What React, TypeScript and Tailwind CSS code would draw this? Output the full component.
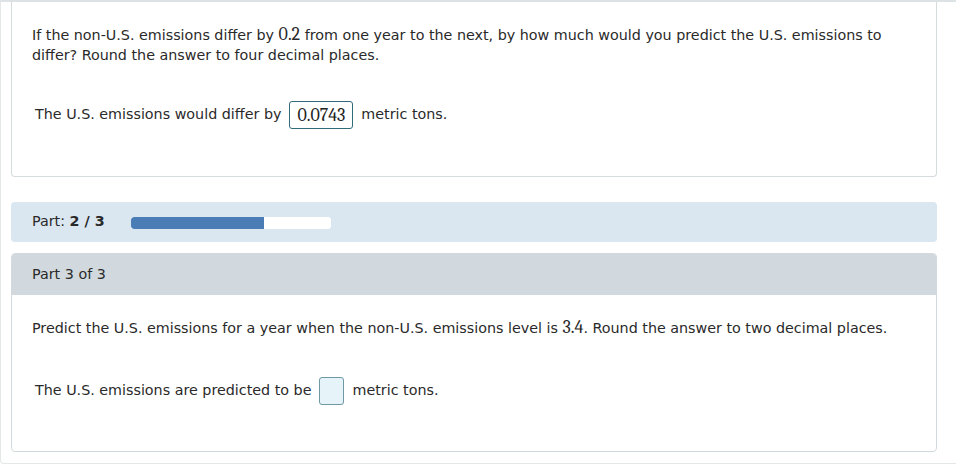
import React from 'react';

const AnswerBox: React.FC<{ value?: string }> = ({ value }) =>
  value ? (
    <span className="inline-flex h-[28px] items-center rounded-[3px] border border-[#2f6b79] bg-white px-[7px] font-serif text-[18px] text-[#222]">
      {value}
    </span>
  ) : (
    <span className="inline-block h-[28px] w-[25px] rounded-[3px] border border-[#6f97a4] bg-[#e6f4f9]" />
  );

const Num: React.FC<{ children: React.ReactNode }> = ({ children }) => (
  <span className="font-serif text-[18px] leading-[20px]">{children}</span>
);

const App: React.FC = () => {
  const progress = 2 / 3;

  return (
    <div className="h-[475px] w-[956px] overflow-hidden bg-white font-[DejaVu_Sans,Verdana,sans-serif] text-[14.3px] text-[#2a2a2a]">
      <div className="h-[464px] rounded-bl-[4px] border-b border-l border-t-2 border-[#e3e7e8] border-t-[#dde3e5] pl-[10px] pr-[19px]">
        {/* previous part */}
        <div className="-mt-[2px] h-[177px] rounded-b-[4px] border-x border-b border-t-2 border-[#d6dbdd] border-t-[#dde3e5] bg-white pl-[20px] pr-[30px] pt-[23px]">
          <p className="leading-[20px]">
            If the non-U.S. emissions differ by <Num>0.2</Num> from one year to the next, by how much would you predict the U.S. emissions to differ? Round the answer to four decimal places.
          </p>
          <div className="mt-[36px] flex items-center gap-[8px] pl-[3px]">
            <span>The U.S. emissions would differ by</span>
            <AnswerBox value="0.0743" />
            <span>metric tons.</span>
          </div>
        </div>

        {/* progress */}
        <div className="mt-[25px] flex h-[40px] items-center rounded-[4px] bg-[#dae6f0] pl-[21px]">
          <span>
            Part: <span className="font-bold">2 / 3</span>
          </span>
          <div className="ml-[26px] mt-[1px] h-[12px] w-[200px] overflow-hidden rounded-[3px] bg-white">
            <div className="h-full rounded-l-[3px] bg-[#4a7db6]" style={{ width: `${progress * 200}px` }} />
          </div>
        </div>

        {/* current part */}
        <div className="mt-[11px] h-[199px] overflow-hidden rounded-[4px] border border-[#d3d9dc] bg-white">
          <div className="flex h-[41px] items-center bg-[#d1d9de] pl-[20px]">Part 3 of 3</div>
          <div className="pl-[20px] pt-[23px]">
            <p className="leading-[20px]">
              Predict the U.S. emissions for a year when the non-U.S. emissions level is <Num>3.4</Num>. Round the answer to two decimal places.
            </p>
            <div className="mt-[39px] flex items-center gap-[8px] pl-[3px]">
              <span>The U.S. emissions are predicted to be</span>
              <AnswerBox />
              <span>metric tons.</span>
            </div>
          </div>
        </div>
      </div>
    </div>
  );
};

export default App;
